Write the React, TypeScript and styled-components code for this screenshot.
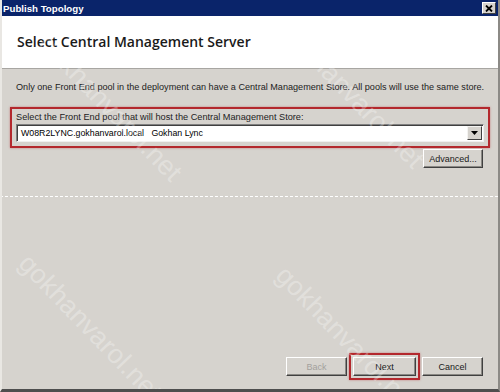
import styled, { createGlobalStyle } from "styled-components";

const GlobalStyle = createGlobalStyle`
  html, body {
    margin: 0;
    padding: 0;
    background: #d6d3ce;
  }
  * {
    box-sizing: border-box;
  }
`;

const Window = styled.div`
  position: relative;
  width: 500px;
  height: 392px;
  display: flex;
  flex-direction: column;
  overflow: hidden;
  background: #d6d3ce;
  border-left: 2px solid #e9e7e3;
  border-right: 2px solid #8c8a86;
  border-bottom: 3px solid #4e4e4e;
  font-family: "Liberation Sans", Arial, sans-serif;
  color: #000;
`;

const TitleBar = styled.div`
  height: 16px;
  flex: none;
  display: flex;
  align-items: center;
  justify-content: space-between;
  padding: 0 2px 0 1px;
  background: #0a246a;
  color: #fff;
  font-weight: bold;
  font-size: 9.7px;
`;

const CloseBox = styled.div`
  width: 14px;
  height: 12px;
  display: flex;
  align-items: center;
  justify-content: center;
  background: #d6d3ce;
  border: 1px solid;
  border-color: #fff #404040 #404040 #fff;
`;

const Header = styled.div`
  height: 53px;
  flex: none;
  display: flex;
  align-items: center;
  padding: 0 0 2px 15px;
  background: #fff;
  border-bottom: 1px solid #a8a6a2;
`;

const Heading = styled.h1`
  margin: 0;
  font-family: "Open Sans", "Liberation Sans", sans-serif;
  font-weight: 600;
  font-size: 14px;
  color: #1a1a1a;
`;

const Body = styled.div`
  flex: 1;
  display: flex;
  flex-direction: column;
  padding: 13px 13px 0 13px;
`;

const Description = styled.p`
  margin: 0;
  font-size: 9.1px;
  white-space: nowrap;
  color: #222;
  padding-left: 1px;
`;

const HighlightBox = styled.div<{ $pad: string }>`
  border: 2px solid #b3282d;
  box-shadow: 0 0 2px rgba(180, 40, 45, 0.5);
  padding: ${(p) => p.$pad};
`;

const PoolGroup = styled(HighlightBox)`
  margin: 15px -5px 0 -5px;
  display: flex;
  flex-direction: column;
  gap: 2px;
`;

const FieldLabel = styled.label`
  font-size: 9.2px;
  color: #222;
`;

const Combo = styled.div`
  height: 18px;
  display: flex;
  align-items: center;
  background: #fff;
  border: 1px solid;
  border-color: #808080 #f0f0f0 #f0f0f0 #808080;
  box-shadow: inset 1px 1px 0 #404040;
  font-size: 8.8px;
  padding: 0 1px 0 4px;
`;

const ComboText = styled.span`
  flex: 1;
  white-space: pre;
`;

const ComboArrow = styled.div`
  width: 15px;
  height: 14px;
  display: flex;
  align-items: center;
  justify-content: center;
  background: #d6d3ce;
  border: 1px solid;
  border-color: #f4f3f1 #404040 #404040 #f4f3f1;
`;

const AdvancedRow = styled.div`
  display: flex;
  justify-content: flex-end;
  margin-top: 1px;
  padding-right: 2px;
`;

const ClassicButton = styled.button<{ $disabled?: boolean; $w: number }>`
  width: ${(p) => p.$w}px;
  height: 19px;
  padding: 0;
  font-family: "Liberation Sans", Arial, sans-serif;
  font-size: 9px;
  color: ${(p) => (p.$disabled ? "#a3a19d" : "#1a1a1a")};
  background: #d6d3ce;
  border: 1px solid;
  border-color: #ffffff #404040 #404040 #ffffff;
  box-shadow: inset -1px -1px 0 #8a8884;
`;

const Divider = styled.div`
  margin: 28px -13px 0 -15px;
  border-top: 1px dashed #ffffff;
`;

const Footer = styled.div`
  margin-top: auto;
  display: flex;
  justify-content: flex-end;
  align-items: center;
  gap: 2px;
  padding: 0 2px 9px 0;
`;

const NextBox = styled(HighlightBox)`
  display: flex;
`;

const Watermark = styled.div<{ $x: number; $y: number }>`
  position: absolute;
  left: ${(p) => p.$x}px;
  top: ${(p) => p.$y}px;
  transform: translate(-50%, -50%) rotate(46deg);
  font-family: "Liberation Sans", Arial, sans-serif;
  font-size: 27px;
  color: rgba(255, 255, 255, 0.3);
  white-space: nowrap;
  pointer-events: none;
`;

const marks = [
  { x: 108, y: 108 },
  { x: 350, y: 95 },
  { x: 88, y: 328 },
  { x: 345, y: 340 },
];

export default function App() {
  return (
    <>
      <GlobalStyle />
      <Window>
        <TitleBar>
          <span>Publish Topology</span>
          <CloseBox>
            <svg width="8" height="7" viewBox="0 0 8 7">
              <path d="M1 0.5 L7 6.5 M7 0.5 L1 6.5" stroke="#000" strokeWidth="1.8" />
            </svg>
          </CloseBox>
        </TitleBar>
        <Header>
          <Heading>Select Central Management Server</Heading>
        </Header>
        <Body>
          <Description>
            Only one Front End pool in the deployment can have a Central Management Store. All pools will use the same store.
          </Description>
          <PoolGroup $pad="3px 4px 4px 4px">
            <FieldLabel>Select the Front End pool that will host the Central Management Store:</FieldLabel>
            <Combo>
              <ComboText>{"W08R2LYNC.gokhanvarol.local   Gokhan Lync"}</ComboText>
              <ComboArrow>
                <svg width="7" height="4" viewBox="0 0 7 4">
                  <path d="M0 0 H7 L3.5 4 Z" fill="#000" />
                </svg>
              </ComboArrow>
            </Combo>
          </PoolGroup>
          <AdvancedRow>
            <ClassicButton $w={60}>Advanced...</ClassicButton>
          </AdvancedRow>
          <Divider />
          <Footer>
            <ClassicButton $w={61} $disabled>
              Back
            </ClassicButton>
            <NextBox $pad="2px">
              <ClassicButton $w={63}>Next</ClassicButton>
            </NextBox>
            <ClassicButton $w={61}>Cancel</ClassicButton>
          </Footer>
        </Body>
        {marks.map((m, i) => (
          <Watermark key={i} $x={m.x} $y={m.y}>
            gokhanvarol.net
          </Watermark>
        ))}
      </Window>
    </>
  );
}
